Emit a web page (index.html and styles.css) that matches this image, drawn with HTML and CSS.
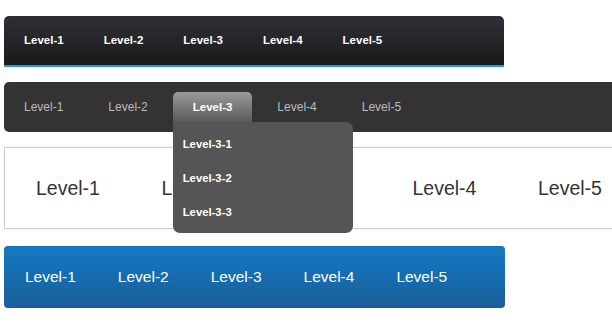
FILE: index.html
```html
<!DOCTYPE html>
<html lang="en">
<head>
    <meta charset="UTF-8">
    <title>Menus</title>
    <link rel="stylesheet" href="styles.css">
</head>
<body>
    <ul class="menu menu-dark">
        <li><a href="#">Level-1</a></li>
        <li><a href="#">Level-2</a></li>
        <li><a href="#">Level-3</a></li>
        <li><a href="#">Level-4</a></li>
        <li><a href="#">Level-5</a></li>
    </ul>

    <ul class="menu menu-tabs">
        <li><a href="#">Level-1</a></li>
        <li><a href="#">Level-2</a></li>
        <li class="active">
            <a href="#">Level-3</a>
            <ul class="submenu">
                <li><a href="#">Level-3-1</a></li>
                <li><a href="#">Level-3-2</a></li>
                <li><a href="#">Level-3-3</a></li>
            </ul>
        </li>
        <li><a href="#">Level-4</a></li>
        <li><a href="#">Level-5</a></li>
    </ul>

    <ul class="menu menu-light">
        <li><a href="#">Level-1</a></li>
        <li><a href="#">Level-2</a></li>
        <li><a href="#">Level-3</a></li>
        <li><a href="#">Level-4</a></li>
        <li><a href="#">Level-5</a></li>
    </ul>

    <ul class="menu menu-blue">
        <li><a href="#">Level-1</a></li>
        <li><a href="#">Level-2</a></li>
        <li><a href="#">Level-3</a></li>
        <li><a href="#">Level-4</a></li>
        <li><a href="#">Level-5</a></li>
    </ul>
</body>
</html>
```

FILE: styles.css
```css
/* General Reset */
* {
    margin: 0;
    padding: 0;
    box-sizing: border-box;
    font-family: 'Liberation Sans', Arial, sans-serif;
}

body {
    background: #fff;
    padding: 16px 0 0 4px;
    width: 612px;
    height: 322px;
    overflow: hidden;
}

.menu {
    list-style: none;
    display: flex;
}

.menu a {
    display: block;
    white-space: nowrap;
    text-decoration: none;
}

/* dark bar with blue line */
.menu-dark {
    width: 500px;
    height: 51px;
    background: linear-gradient(#2f3036, #1a1a1c);
    border-bottom: 2px solid #17a3d8;
    border-radius: 5px 5px 0 0;
}

.menu-dark a {
    padding: 0 20px;
    line-height: 49px;
    color: #fff;
    font-size: 11.5px;
    font-weight: bold;
}

/* tabs with dropdown */
.menu-tabs {
    position: relative;
    z-index: 2;
    width: 640px;
    height: 50px;
    margin-top: 15px;
    padding-top: 10px;
    background: #333;
    border-radius: 5px;
}

.menu-tabs > li {
    position: relative;
    margin-right: 5px;
}

.menu-tabs > li > a {
    padding: 0 20px;
    line-height: 30px;
    height: 30px;
    color: #bbb;
    font-size: 12px;
}

.menu-tabs > li.active > a {
    background: linear-gradient(#9a9a9a, #5a5a5a);
    border-radius: 5px 5px 0 0;
    color: #fff;
    font-weight: bold;
    font-size: 11.5px;
}

.submenu {
    position: absolute;
    top: 30px;
    left: 0;
    width: 180px;
    padding: 5px 0 4px;
    list-style: none;
    background: #555;
    border-radius: 0 7px 7px 7px;
}

.submenu a {
    padding: 0 10px;
    line-height: 34px;
    color: #fff;
    font-size: 11.3px;
    font-weight: bold;
}

/* light bordered bar */
.menu-light {
    width: 640px;
    height: 82px;
    margin-top: 15px;
    background: #fff;
    border: 1px solid #ccc;
    box-shadow: 0 0 3px rgba(0, 0, 0, 0.08);
}

.menu-light li {
    width: 125.5px;
    flex-shrink: 0;
}

.menu-light a {
    padding-left: 31px;
    line-height: 80px;
    color: #333;
    font-size: 19.5px;
}

/* blue bar */
.menu-blue {
    width: 501px;
    height: 62px;
    margin-top: 17px;
    background: linear-gradient(#1479c4, #1a5e97);
    border-top: 1px solid #1170b8;
    border-radius: 4px;
}

.menu-blue a {
    padding: 0 21px;
    line-height: 60px;
    color: #fff;
    font-size: 15.5px;
}
```
